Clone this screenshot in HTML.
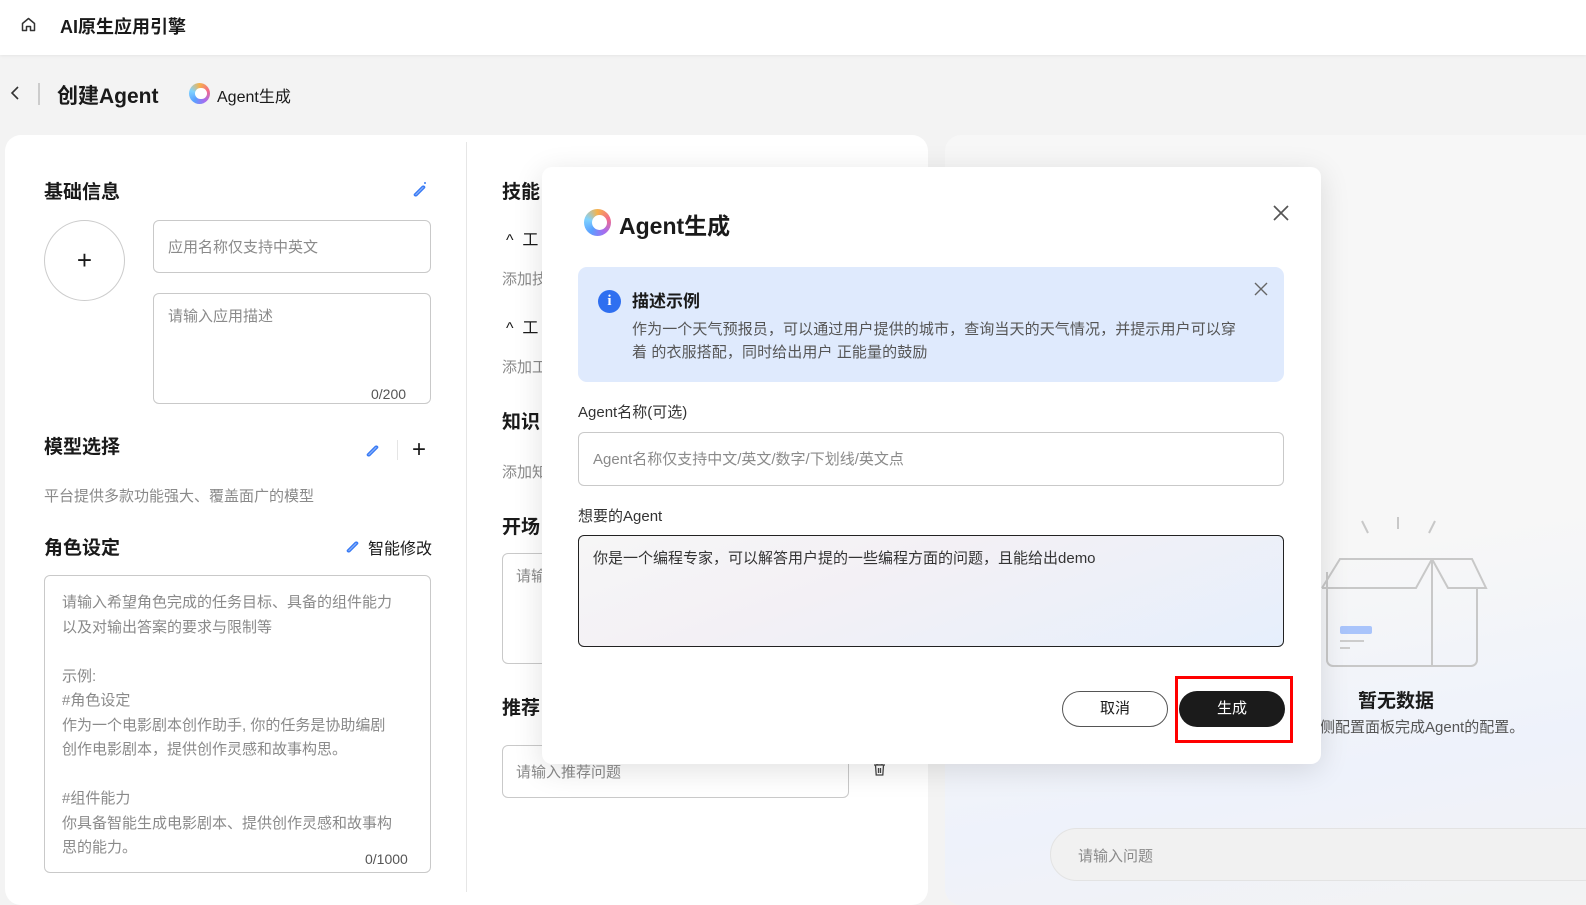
<!DOCTYPE html>
<html><head><meta charset="utf-8"><style>
*{box-sizing:border-box;margin:0;padding:0}
body{width:1586px;height:892px;overflow:hidden;background:#f3f3f3;font-family:"Liberation Sans","Noto Sans CJK SC",sans-serif;color:#1a1a1a;position:relative}
.a{position:absolute;white-space:nowrap}
.h{font-weight:700;font-size:19px}
.g{color:#8a8a8a;font-size:15px}
.box{position:absolute;border:1px solid #c9c9c9;border-radius:6px;background:#fff}
.logo{position:absolute;border-radius:50%;background:conic-gradient(#f7b24a,#f26b8a,#a46cf0,#5aa0ff,#7fd3ff,#f7b24a)}
.logo:after{content:"";position:absolute;left:28%;top:22%;width:56%;height:56%;border-radius:50%;background:#fff}
</style></head><body>
<div class="a" style="left:0;top:0;width:1586px;height:55px;background:#fff;box-shadow:0 1px 3px rgba(0,0,0,.06)"></div>
<svg class="a" style="left:20px;top:16px" width="17" height="17" viewBox="0 0 17 17"><path d="M2.5 7.5L8.5 2.5L14.5 7.5V14.5H10.5V10.5H6.5V14.5H2.5Z" fill="none" stroke="#333" stroke-width="1.5" stroke-linejoin="round"/></svg>
<div class="a" style="left:60px;top:13px;font-size:18px;font-weight:700">AI原生应用引擎</div>
<svg class="a" style="left:8px;top:85px" width="14" height="16"><path d="M10 2L4 8L10 14" fill="none" stroke="#333" stroke-width="1.6"/></svg>
<div class="a" style="left:38px;top:83px;width:2px;height:22px;background:#ccc"></div>
<div class="a" style="left:57px;top:80px;font-size:21px;font-weight:700">创建Agent</div>
<div class="logo" style="left:189px;top:83px;width:21px;height:21px"></div>
<div class="a" style="left:217px;top:83px;font-size:16px">Agent生成</div>

<div class="a" style="left:5px;top:135px;width:923px;height:770px;background:#fff;border-radius:16px"></div>
<div class="a" style="left:466px;top:142px;width:1px;height:750px;background:#e6e6e6"></div>
<div class="a" style="left:945px;top:135px;width:660px;height:770px;border-radius:16px;background:linear-gradient(170deg,#f7f7f7 55%,#eef2fb 80%,#f3f3f3)"></div>

<div class="a h" style="left:44px;top:177px">基础信息</div>
<svg class="a" style="left:411px;top:180px" width="18" height="18"><path d="M3 15L12 6M5 16L14 7M3 15l2 1M12 6l2 1" stroke="#3b7cf5" stroke-width="1.6" fill="none"/><circle cx="14" cy="3" r="1" fill="#3b7cf5"/></svg>
<div class="a" style="left:44px;top:220px;width:81px;height:81px;border:1px solid #ccc;border-radius:50%;text-align:center;line-height:78px;font-size:26px">+</div>
<div class="box" style="left:153px;top:220px;width:278px;height:53px"></div>
<div class="a g" style="left:168px;top:236px">应用名称仅支持中英文</div>
<div class="box" style="left:153px;top:293px;width:278px;height:111px"></div>
<div class="a g" style="left:168px;top:305px">请输入应用描述</div>
<div class="a" style="left:371px;top:386px;font-size:14px;color:#555">0/200</div>
<div class="a h" style="left:44px;top:432px">模型选择</div>
<svg class="a" style="left:364px;top:440px" width="18" height="18"><path d="M3 15L12 6M5 16L14 7M3 15l2 1M12 6l2 1" stroke="#3b7cf5" stroke-width="1.6" fill="none"/></svg>
<div class="a" style="left:397px;top:440px;width:1px;height:20px;background:#e5e5e5"></div>
<div class="a" style="left:412px;top:436px;font-size:24px">+</div>
<div class="a g" style="left:44px;top:485px">平台提供多款功能强大、覆盖面广的模型</div>
<div class="a h" style="left:44px;top:533px">角色设定</div>
<svg class="a" style="left:344px;top:536px" width="18" height="18"><path d="M3 15L12 6M5 16L14 7M3 15l2 1M12 6l2 1" stroke="#3b7cf5" stroke-width="1.6" fill="none"/></svg>
<div class="a" style="left:368px;top:535px;font-size:16px">智能修改</div>
<div class="box" style="left:44px;top:575px;width:387px;height:298px"></div>
<div class="a g" style="left:62px;top:591px;line-height:24.5px;white-space:pre">请输入希望角色完成的任务目标、具备的组件能力
以及对输出答案的要求与限制等

示例:
#角色设定
作为一个电影剧本创作助手, 你的任务是协助编剧
创作电影剧本，提供创作灵感和故事构思。

#组件能力
你具备智能生成电影剧本、提供创作灵感和故事构
思的能力。</div>
<div class="a" style="left:365px;top:851px;font-size:14px;color:#555">0/1000</div>

<div class="a h" style="left:502px;top:177px">技能</div>
<div class="a" style="left:506px;top:226px;font-size:16px">^&nbsp; 工</div>
<div class="a g" style="left:502px;top:268px">添加技</div>
<div class="a" style="left:506px;top:314px;font-size:16px">^&nbsp; 工</div>
<div class="a g" style="left:502px;top:356px">添加工</div>
<div class="a h" style="left:502px;top:407px">知识</div>
<div class="a g" style="left:502px;top:461px">添加知</div>
<div class="a h" style="left:502px;top:512px">开场</div>
<div class="box" style="left:502px;top:553px;width:60px;height:111px"></div>
<div class="a g" style="left:516px;top:565px">请输</div>
<div class="a h" style="left:502px;top:693px">推荐</div>
<div class="box" style="left:502px;top:745px;width:347px;height:53px"></div>
<div class="a g" style="left:516px;top:761px">请输入推荐问题</div>
<svg class="a" style="left:872px;top:762px" width="15" height="15"><path d="M2 3h11M5 3V1.5h5V3M3.5 3l.7 10h6.6l.7-10M6.5 6v5M8.5 6v5" fill="none" stroke="#444" stroke-width="1.3"/></svg>

<svg class="a" style="left:1320px;top:515px" width="170" height="155" viewBox="0 0 170 155"><g fill="none" stroke="#c8c8c8" stroke-width="2"><path d="M78 2v12M42 6l6 12M115 6l-6 12"/><path d="M7 57V145a6 6 0 0 0 6 6H112V44H20L2 73"/><path d="M112 44L96 73H2"/><path d="M112 44l16 29h38l-14-29zM112 151h39a6 6 0 0 0 6-6V73"/></g><rect x="20" y="111" width="32" height="8" rx="2" fill="#a9c4fb"/><path d="M20 126h24M20 133h10" stroke="#ccc" stroke-width="2"/></svg>
<div class="a" style="left:1358px;top:686px;font-size:19px;font-weight:700">暂无数据</div>
<div class="a" style="left:1320px;top:716px;font-size:15px;color:#555">侧配置面板完成Agent的配置。</div>
<div class="a" style="left:1050px;top:828px;width:560px;height:53px;border:1px solid #e3e3e3;border-radius:27px;background:#f1f1f1"></div>
<div class="a g" style="left:1078px;top:845px">请输入问题</div>

<div class="a" style="left:542px;top:167px;width:779px;height:597px;background:#fff;border-radius:10px;box-shadow:0 6px 30px rgba(0,0,0,.12)"></div>
<div class="logo" style="left:584px;top:209px;width:27px;height:27px"></div>
<div class="a" style="left:619px;top:207px;font-size:23px;font-weight:700">Agent生成</div>
<svg class="a" style="left:1272px;top:204px" width="18" height="18"><path d="M2 2l14 14M16 2L2 16" stroke="#555" stroke-width="1.7"/></svg>
<div class="a" style="left:578px;top:267px;width:706px;height:115px;background:#dfeafd;border-radius:9px"></div>
<div class="a" style="left:598px;top:290px;width:23px;height:23px;border-radius:50%;background:#2f6ff0;color:#fff;font-weight:700;font-size:15px;text-align:center;line-height:23px;font-family:'Liberation Serif',serif">i</div>
<div class="a" style="left:632px;top:287px;font-size:17px;font-weight:700">描述示例</div>
<svg class="a" style="left:1254px;top:282px" width="14" height="14"><path d="M1 1l12 12M13 1L1 13" stroke="#666" stroke-width="1.4"/></svg>
<div class="a" style="left:632px;top:318px;font-size:15px;color:#555;line-height:23px;white-space:normal;width:614px;letter-spacing:0.1px">作为一个天气预报员，可以通过用户提供的城市，查询当天的天气情况，并提示用户可以穿着 的衣服搭配，同时给出用户 正能量的鼓励</div>
<div class="a" style="left:578px;top:401px;font-size:15px;color:#333">Agent名称(可选)</div>
<div class="box" style="left:578px;top:432px;width:706px;height:54px"></div>
<div class="a g" style="left:593px;top:448px">Agent名称仅支持中文/英文/数字/下划线/英文点</div>
<div class="a" style="left:578px;top:505px;font-size:15px;color:#333">想要的Agent</div>
<div class="a" style="left:578px;top:535px;width:706px;height:112px;border:1.5px solid #222;border-radius:6px;background:linear-gradient(160deg,#f6f6f6,#f3f0f5 40%,#e6effc)"></div>
<div class="a" style="left:593px;top:547px;font-size:15px;color:#333">你是一个编程专家，可以解答用户提的一些编程方面的问题，且能给出demo</div>
<div class="a" style="left:1062px;top:691px;width:106px;height:36px;border:1px solid #555;border-radius:18px;text-align:center;line-height:34px;font-size:15px">取消</div>
<div class="a" style="left:1179px;top:691px;width:106px;height:36px;background:#1b1b1b;border-radius:18px;color:#fff;text-align:center;line-height:36px;font-size:15px">生成</div>
<div class="a" style="left:1175px;top:676px;width:118px;height:67px;border:3px solid #f00"></div>
</body></html>
